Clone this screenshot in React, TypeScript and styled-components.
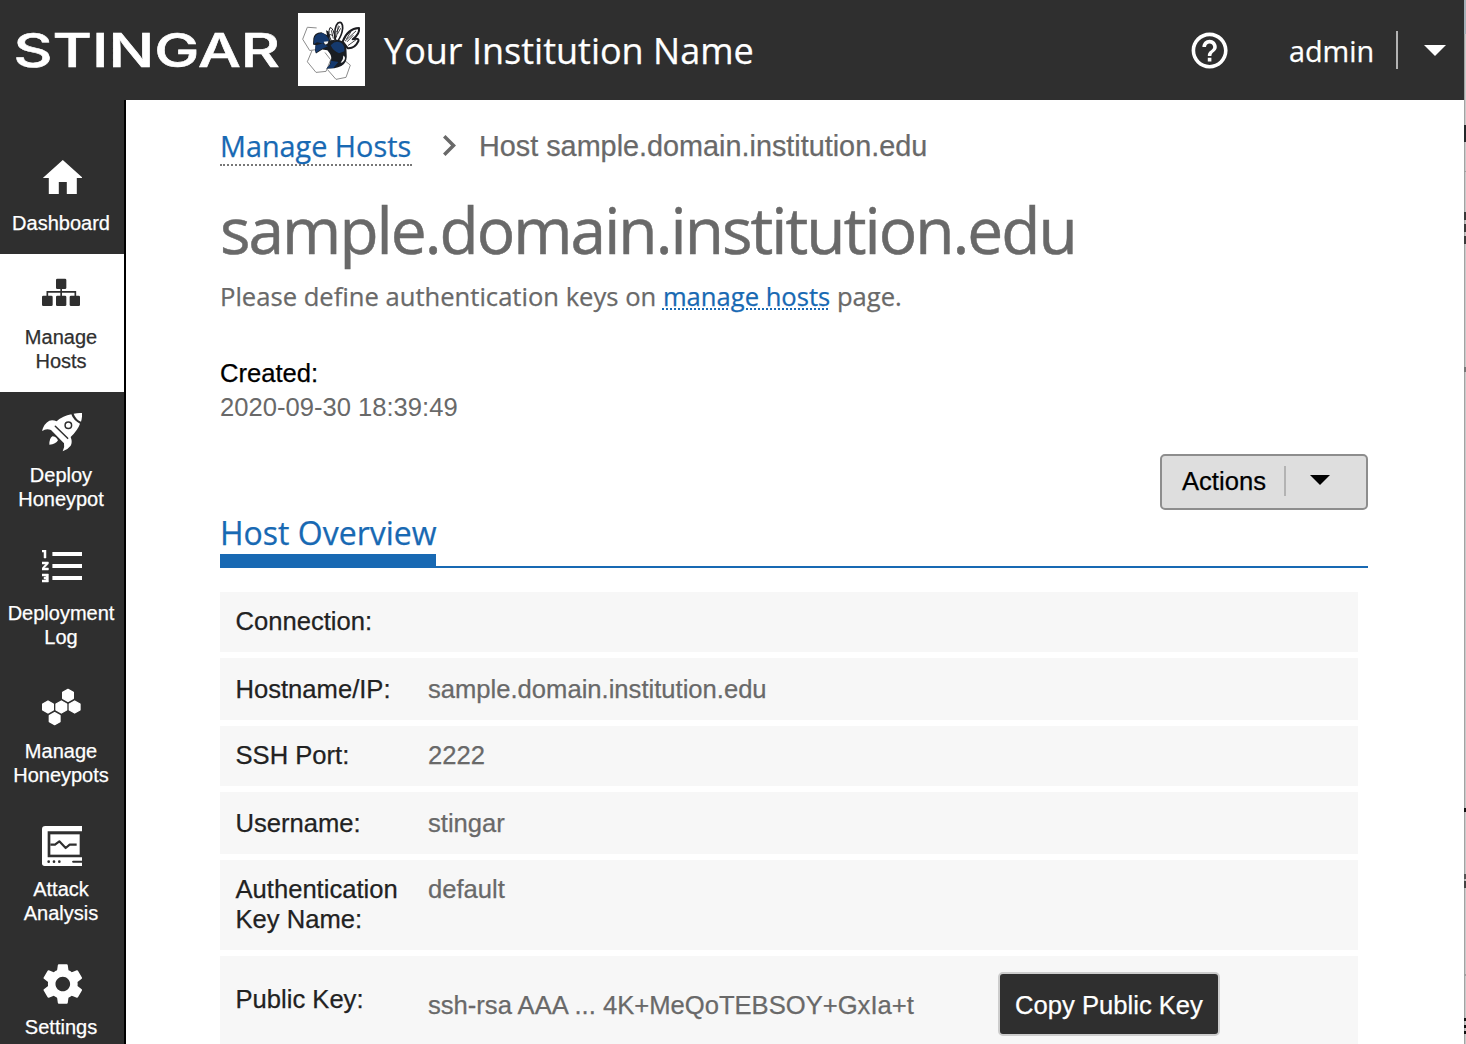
import React from "react";
import styled, { createGlobalStyle } from "styled-components";
import { MdHelpOutline } from "react-icons/md";

const ink = "#2f2f2f";
const blue = "#1869b3";
const grey = "#696969";
const sans = `"Liberation Sans", Arial, sans-serif`;
const display = `"Open Sans", "Noto Sans", sans-serif`;

const GlobalStyle = createGlobalStyle`
  *, *::before, *::after { box-sizing: border-box; }
  html, body { margin: 0; background: #fff; overflow: hidden; }
  body { font-family: ${sans}; color: #222; -webkit-text-stroke: 0.25px currentColor; }
`;

const Window = styled.div`
  display: flex;
  width: 1466px;
  height: 1044px;
  overflow: hidden;
`;
const Page = styled.div`
  display: flex;
  flex-direction: column;
  width: 1464px;
  height: 100%;
`;
const edgeMarks: [number, number, string][] = [
  [0, 34, "#a5b0b8"],
  [125, 142, "#24282b"],
  [171, 172, "#a0a0a0"],
  [212, 220, "#3a3a3a"],
  [224, 232, "#3a3a3a"],
  [236, 244, "#3a3a3a"],
  [367, 372, "#777777"],
  [808, 812, "#101010"],
  [874, 879, "#555555"],
  [881, 888, "#444444"],
  [974, 976, "#a0a0a0"],
  [1018, 1021, "#101010"],
  [1025, 1028, "#101010"],
  [1031, 1034, "#101010"],
];
const edgeStops = edgeMarks
  .map(([from, to, c]) => `transparent ${from}px, ${c} ${from}px, ${c} ${to}px, transparent ${to}px`)
  .join(", ");
const Edge = styled.div`
  width: 2px;
  height: 100%;
  background: linear-gradient(${edgeStops}), linear-gradient(90deg, #a3a3a3 50%, #cacaca 50%);
`;

const Header = styled.header`
  display: flex;
  align-items: center;
  flex: none;
  height: 100px;
  padding: 0 18px 0 13px;
  background: ${ink};
  color: #fff;
  font-family: ${display};
`;
const Wordmark = styled.svg`
  display: block;
  width: 270px;
  height: 64px;
  margin-right: 15px;
  text { font: 500 46px Inter, sans-serif; fill: #fff; stroke: #fff; stroke-width: 0.6px; }
`;
const Emblem = styled.svg`
  display: block;
  width: 67px;
  height: 73px;
  margin-bottom: 1px;
  background: #fff;
`;
const Institution = styled.div`
  margin-left: 19px;
  padding-top: 2px;
  font-size: 36px;
  line-height: 50px;
  white-space: nowrap;
`;
const Help = styled.div`
  display: flex;
  margin-left: auto;
  margin-right: 58px;
  padding-top: 1px;
  svg { display: block; width: 43.2px; height: 43.2px; }
`;
const User = styled.div`
  display: flex;
  align-items: center;
  gap: 21px;
  font-size: 28.8px;
  line-height: 38px;
`;
const UserName = styled.span`
  width: 86px;
  padding-top: 1px;
  white-space: nowrap;
`;
const Divider = styled.span<{ $h: number }>`
  width: 2px;
  height: ${(p) => p.$h}px;
  background: #b3b3b3;
`;
const Caret = styled.span<{ $w: number }>`
  width: 0;
  height: 0;
  border: solid transparent;
  border-width: ${(p) => p.$w / 2}px ${(p) => p.$w / 2}px 0;
  border-top-color: currentColor;
`;
const UserCaret = styled(Caret)`
  margin-left: 26px;
`;

const Body = styled.div`
  display: flex;
  flex: 1;
  min-height: 0;
`;
const Sidebar = styled.nav`
  flex: none;
  width: 126px;
  padding-top: 40px;
  border-right: 2px solid #000;
  background: ${ink};
  overflow: hidden;
`;
const NavItem = styled.a<{ $active?: boolean }>`
  display: flex;
  flex-direction: column;
  align-items: center;
  padding: 20px 0 19px;
  background: ${(p) => (p.$active ? "#fff" : ink)};
  color: ${(p) => (p.$active ? ink : "#fff")};
`;
const NavIcon = styled.svg`
  display: block;
  width: 40px;
  height: 40px;
  fill: currentColor;
`;
const NavLabel = styled.span`
  width: 100%;
  padding-right: 2px;
  margin-top: 11px;
  font-size: 20px;
  line-height: 24px;
  text-align: center;
  white-space: pre-line;
`;

const Main = styled.main`
  flex: 1;
  padding: 28px 96px 0 94px;
  background: #fff;
`;
const Breadcrumbs = styled.div`
  display: flex;
  align-items: flex-start;
  height: 38px;
  color: ${grey};
  font-size: 28.8px;
  line-height: 36px;
`;
const CrumbLink = styled.a`
  width: 192px;
  height: 38px;
  color: ${blue};
  font-family: ${display};
  line-height: 35px;
  white-space: nowrap;
  border-bottom: 2px dotted #777;
`;
const Chevron = styled.svg`
  width: 13px;
  height: 21px;
  margin: 7px 22px 0 31px;
  fill: ${grey};
`;
const Crumb = styled.span`
  padding-left: 1px;
  white-space: nowrap;
`;
const Title = styled.h1`
  margin: 18px 0 0;
  height: 92px;
  color: ${grey};
  font: 400 64px/92px ${display};
  letter-spacing: -1.97px;
  white-space: nowrap;
  -webkit-text-stroke: 0.5px currentColor;
`;
const Notice = styled.p`
  margin: 3px 0 0;
  height: 36px;
  color: ${grey};
  font: 400 25.6px/36px ${display};
  white-space: nowrap;
`;
const InlineLink = styled.a`
  color: ${blue};
  text-decoration: underline dotted 2px;
  text-underline-offset: 2px;
`;
const Meta = styled.dl`
  margin: 41px 0 0;
  font-size: 25.6px;
  line-height: 34px;
  dt { color: #000; }
  dd { margin: 0; color: ${grey}; -webkit-text-stroke: 0; }
`;
const ActionsBar = styled.div`
  display: flex;
  justify-content: flex-end;
  margin-top: 30px;
`;
const ActionsButton = styled.button`
  display: flex;
  align-items: center;
  width: 208px;
  height: 56px;
  padding: 0 0 2px 20px;
  border: 2px solid #8d8d8d;
  border-radius: 5px;
  background: #dedede;
  color: #000;
  font: 400 25.6px/30px ${sans};
  ${Divider} { margin: 0 24px 0 18px; }
  ${Caret} { margin-bottom: 2px; }
`;
const Tabs = styled.div`
  display: flex;
  height: 58px;
  border-bottom: 2px solid ${blue};
`;
const Tab = styled.div`
  width: 216px;
  height: 58px;
  border-bottom: 14px solid ${blue};
  color: ${blue};
  font: 400 32px/46px ${display};
  white-space: nowrap;
`;
const Table = styled.div`
  display: flex;
  flex-direction: column;
  gap: 6px;
  width: 1138px;
  margin-top: 24px;
`;
const Row = styled.div<{ $h: number }>`
  display: flex;
  align-items: flex-start;
  flex: none;
  height: ${(p) => p.$h}px;
  padding: 14px 0 0 15px;
  background: #f7f7f7;
  font-size: 25.6px;
  line-height: 30px;
`;
const Key = styled.div<{ $drop?: number }>`
  width: 193px;
  padding-top: ${(p) => p.$drop ?? 0}px;
  padding-left: 0.5px;
  color: #222;
  white-space: pre-line;
`;
const Value = styled.div<{ $drop?: number }>`
  width: 570px;
  padding-top: ${(p) => p.$drop ?? 0}px;
  color: ${grey};
  white-space: nowrap;
`;
const CopyButton = styled.button`
  width: 222px;
  height: 64px;
  margin-top: 2px;
  padding: 2px 0 0;
  border: 2px solid #cdcdcd;
  border-radius: 5px;
  background: ${ink};
  color: #fff;
  font: 400 25.6px/30px ${sans};
  white-space: nowrap;
`;

const hexPoints = (cx: number, cy: number) =>
  [[0, -18], [16, -9], [16, 9], [0, 18], [-16, 9], [-16, -9]]
    .map(([x, y]) => `${cx + x},${cy + y}`)
    .join(" ");

const HomeIcon = () => (
  <NavIcon viewBox="1.600 3 20 20"><path d="M10 20v-6h4v6h5v-8h3L12 3 2 12h3v8z" /></NavIcon>
);
const HostsIcon = () => (
  <NavIcon viewBox="0 0 120 120">
    <rect x="42" y="14" width="31" height="31" rx="4" />
    <rect x="0" y="65" width="32" height="31" rx="4" />
    <rect x="42" y="65" width="31" height="31" rx="4" />
    <rect x="83" y="65" width="31" height="31" rx="4" />
    <path d="M16 66V53.5H100V66M57.5 44V66" fill="none" stroke="currentColor" strokeWidth="5" />
  </NavIcon>
);
const RocketIcon = () => (
  <NavIcon viewBox="0 0 120 120">
    <path d="M95 5Q108 2 120 3Q121 16 117 29Q101 22 95 5Z" />
    <path fillRule="evenodd" d="M88 7Q94 25 114 35Q108 53 86 75Q92 91 86 101Q78 112 62 118Q69 106 66 94L27 54Q13 48 0 57Q6 34 22 26Q33 23 44 28Q63 11 88 7ZM79 28A12 12 0 1 0 79 52A12 12 0 1 0 79 28ZM79 32.500A7.500 7.500 0 1 1 79 47.500A7.500 7.500 0 1 1 79 32.500Z" />
    <path d="M40 43L77 79" fill="none" stroke={ink} strokeWidth="4.500" strokeLinecap="round" />
    <path d="M31 73Q42 73 48 85Q42 97 22 98Q22 79 31 73Z" />
  </NavIcon>
);
const ListIcon = () => (
  <NavIcon viewBox="2 4 20 20">
    <path
      d="M2 17h2v.5H3v1h1v.5H2v1h3.2v-4H2v1zm1-9h1V4H2v1h1v3zm-1 3h1.8L2 13.1v.9h3.2v-1H3.2L5.2 10.9V10H2v1z"
      stroke="currentColor"
      strokeWidth="0.250"
    />
    <path d="M7.200 5v2H22V5zm0 14H22v-2H7.200zm0-6H22v-2H7.200z" />
  </NavIcon>
);
const HexIcon = () => (
  <NavIcon viewBox="0 0 120 120" stroke="currentColor" strokeWidth="4" strokeLinejoin="round">
    {[[18, 57], [58, 57], [98, 57], [78, 22], [38, 92]].map(([x, y]) => (
      <polygon key={`${x}-${y}`} points={hexPoints(x, y)} />
    ))}
  </NavIcon>
);
const MonitorIcon = () => (
  <NavIcon viewBox="0 0 120 120">
    <path d="M10 0H120V120H8Q0 120 0 112V10Q0 0 10 0Z" />
    <path d="M17 16H120V94H17Z" fill={ink} />
    <path d="M25 25H113V86H25Z" />
    <path d="M25 56H39L52 46L71 66L83 56H104" fill="none" stroke={ink} strokeWidth="6.500" strokeLinejoin="round" />
    <g fill={ink}>
      <circle cx="20" cy="107" r="4" />
      <circle cx="36" cy="107" r="4" />
      <circle cx="52" cy="107" r="4" />
      <path d="M93 104H120V110H93Q87 107 93 104Z" />
    </g>
  </NavIcon>
);
const GearIcon = () => (
  <NavIcon viewBox="1.500 1.900 20.200 20.200">
    <path d="M19.430 12.980c.04-.32.07-.64.07-.98s-.03-.66-.07-.98l2.110-1.650c.19-.15.24-.42.12-.64l-2-3.460c-.12-.22-.39-.3-.61-.22l-2.490 1c-.52-.4-1.080-.73-1.690-.98l-.38-2.650C14.460 2.180 14.250 2 14 2h-4c-.25 0-.46.18-.49.42l-.38 2.650c-.61.25-1.170.59-1.690.98l-2.490-1c-.23-.09-.49 0-.61.22l-2 3.460c-.13.22-.07.49.12.64l2.110 1.650c-.04.32-.07.65-.07.98s.03.66.07.98l-2.110 1.650c-.19.15-.24.42-.12.64l2 3.460c.12.22.39.3.61.22l2.490-1c.52.4 1.080.73 1.690.98l.38 2.650c.03.24.24.42.49.42h4c.25 0 .46-.18.49-.42l.38-2.650c.61-.25 1.170-.59 1.690-.98l2.490 1c.23.09.49 0 .61-.22l2-3.460c.12-.22.07-.49-.12-.64l-2.110-1.650zM12 15.700c-2.040 0-3.700-1.660-3.700-3.700s1.660-3.700 3.700-3.700 3.700 1.660 3.700 3.700-1.660 3.700-3.700 3.700z" />
  </NavIcon>
);

const WaspEmblem = () => (
  <Emblem viewBox="24 24 201 220" preserveAspectRatio="none">
    <g fill="none" stroke="#8c8c8c" strokeWidth="3">
      <path d="M80 69L52 67L38 103L59 137L82 134" />
      <path d="M66 137L52 171L78 203L108 200L122 165L105 143" />
      <path d="M112 194L138 224L168 218L181 181L160 164" />
    </g>
    <g fill="#fff" stroke="#1c1c20" strokeLinejoin="round">
      <path d="M124 108Q112 84 120 68Q132 68 135 106Z" strokeWidth="3" />
      <path d="M136 105Q131 67 144 54Q158 47 158 70Q156 91 143 109Z" strokeWidth="5" />
      <path d="M158 110Q173 70 207 69Q210 88 188 103Q208 98 205 109Q194 132 173 130Z" strokeWidth="6" />
      <path d="M139 98L145 62M142 88L152 70M139 82L149 64M165 109L198 78M169 103L183 80M171 111L190 91M174 122L199 104M124 76L130 101M118 88L129 92" fill="none" strokeWidth="2.500" />
    </g>
    <path d="M70 101Q72 83 94 82L111 90L108 76L116 80L120 106L129 108L147 105Q165 110 169 127L170 148Q172 165 162 178Q145 194 109 191Q121 182 121 169Q128 158 119 145L112 136L97 134L78 146L75 137L77 121L69 119Z" fill="#191d23" />
    <path d="M73 100Q78 85 97 84Q112 91 118 107L99 116L81 112L71 118ZM76 122L97 116L114 124L96 132L77 144ZM122 121Q136 106 152 113Q165 121 163 139L147 145Q129 138 122 121ZM123 168Q124 180 109 191L130 190L145 172Z" fill="#15396d" />
    <path d="M101 111L115 109Q114 119 105 119Z" fill="#eee" />
    <path d="M160 152Q169 157 162 168Q157 175 152 174Q161 164 160 152Z" fill="#f4f4f4" />
  </Emblem>
);

const nav = [
  { label: "Dashboard", Icon: HomeIcon },
  { label: "Manage\nHosts", Icon: HostsIcon, active: true },
  { label: "Deploy\nHoneypot", Icon: RocketIcon },
  { label: "Deployment\nLog", Icon: ListIcon },
  { label: "Manage\nHoneypots", Icon: HexIcon },
  { label: "Attack\nAnalysis", Icon: MonitorIcon },
  { label: "Settings", Icon: GearIcon },
];

const rows = [
  { key: "Connection:", value: "", h: 60 },
  { key: "Hostname/IP:", value: "sample.domain.institution.edu", h: 62, drop: 2 },
  { key: "SSH Port:", value: "2222", h: 60 },
  { key: "Username:", value: "stingar", h: 62, drop: 2 },
  { key: "Authentication\nKey Name:", value: "default", h: 90 },
];

export default function App() {
  return (
    <Window>
      <GlobalStyle />
      <Page>
        <Header>
          <Wordmark viewBox="0 0 270 64">
            <text x="0.5" y="48.500" textLength="266.500" lengthAdjust="spacingAndGlyphs">STINGAR</text>
          </Wordmark>
          <WaspEmblem />
          <Institution>Your Institution Name</Institution>
          <Help><MdHelpOutline /></Help>
          <User>
            <UserName>admin</UserName>
            <Divider $h={38} />
          </User>
          <UserCaret $w={22} />
        </Header>
        <Body>
          <Sidebar>
            {nav.map(({ label, Icon, active }) => (
              <NavItem key={label} $active={active}>
                <Icon />
                <NavLabel>{label}</NavLabel>
              </NavItem>
            ))}
          </Sidebar>
          <Main>
            <Breadcrumbs>
              <CrumbLink>Manage Hosts</CrumbLink>
              <Chevron viewBox="8.590 6 7.410 12"><path d="M10 6L8.590 7.410 13.170 12l-4.580 4.590L10 18l6-6z" /></Chevron>
              <Crumb>Host sample.domain.institution.edu</Crumb>
            </Breadcrumbs>
            <Title>sample.domain.institution.edu</Title>
            <Notice>
              Please define authentication keys on <InlineLink>manage hosts</InlineLink> page.
            </Notice>
            <Meta>
              <dt>Created:</dt>
              <dd>2020-09-30 18:39:49</dd>
            </Meta>
            <ActionsBar>
              <ActionsButton>
                Actions
                <Divider $h={30} />
                <Caret $w={20} />
              </ActionsButton>
            </ActionsBar>
            <Tabs>
              <Tab>Host Overview</Tab>
            </Tabs>
            <Table>
              {rows.map((r) => (
                <Row key={r.key} $h={r.h}>
                  <Key $drop={r.drop}>{r.key}</Key>
                  <Value $drop={r.drop}>{r.value}</Value>
                </Row>
              ))}
              <Row $h={98}>
                <Key $drop={14}>Public Key:</Key>
                <Value $drop={20}>ssh-rsa AAA ... 4K+MeQoTEBSOY+GxIa+t</Value>
                <CopyButton>Copy Public Key</CopyButton>
              </Row>
            </Table>
          </Main>
        </Body>
      </Page>
      <Edge />
    </Window>
  );
}
